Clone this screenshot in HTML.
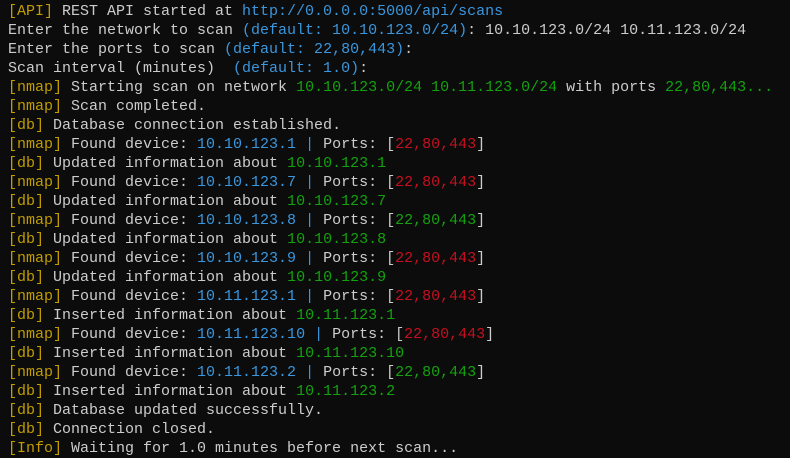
<!DOCTYPE html><html><head><style>
body{margin:0;background:#0c0c0c;width:790px;height:458px;overflow:hidden}
pre{margin:0;padding:2px 0 0 8px;font:15px/19px "Liberation Mono",monospace;color:#cccccc}
.y{color:#c19c00}.b{color:#3a96dd}.g{color:#13a10e}.r{color:#c50f1f}
</style></head><body><pre><span class="y">[API]</span> REST API started at <span class="b">http://0.0.0.0:5000/api/scans</span>
Enter the network to scan <span class="b">(default: 10.10.123.0/24)</span>: 10.10.123.0/24 10.11.123.0/24
Enter the ports to scan <span class="b">(default: 22,80,443)</span>:
Scan interval (minutes)  <span class="b">(default: 1.0)</span>:
<span class="y">[nmap]</span> Starting scan on network <span class="g">10.10.123.0/24 10.11.123.0/24</span> with ports <span class="g">22,80,443...</span>
<span class="y">[nmap]</span> Scan completed.
<span class="y">[db]</span> Database connection established.
<span class="y">[nmap]</span> Found device: <span class="b">10.10.123.1 |</span> Ports: [<span class="r">22,80,443</span>]
<span class="y">[db]</span> Updated information about <span class="g">10.10.123.1</span>
<span class="y">[nmap]</span> Found device: <span class="b">10.10.123.7 |</span> Ports: [<span class="r">22,80,443</span>]
<span class="y">[db]</span> Updated information about <span class="g">10.10.123.7</span>
<span class="y">[nmap]</span> Found device: <span class="b">10.10.123.8 |</span> Ports: [<span class="g">22,80,443</span>]
<span class="y">[db]</span> Updated information about <span class="g">10.10.123.8</span>
<span class="y">[nmap]</span> Found device: <span class="b">10.10.123.9 |</span> Ports: [<span class="r">22,80,443</span>]
<span class="y">[db]</span> Updated information about <span class="g">10.10.123.9</span>
<span class="y">[nmap]</span> Found device: <span class="b">10.11.123.1 |</span> Ports: [<span class="r">22,80,443</span>]
<span class="y">[db]</span> Inserted information about <span class="g">10.11.123.1</span>
<span class="y">[nmap]</span> Found device: <span class="b">10.11.123.10 |</span> Ports: [<span class="r">22,80,443</span>]
<span class="y">[db]</span> Inserted information about <span class="g">10.11.123.10</span>
<span class="y">[nmap]</span> Found device: <span class="b">10.11.123.2 |</span> Ports: [<span class="g">22,80,443</span>]
<span class="y">[db]</span> Inserted information about <span class="g">10.11.123.2</span>
<span class="y">[db]</span> Database updated successfully.
<span class="y">[db]</span> Connection closed.
<span class="y">[Info]</span> Waiting for 1.0 minutes before next scan...</pre></body></html>
